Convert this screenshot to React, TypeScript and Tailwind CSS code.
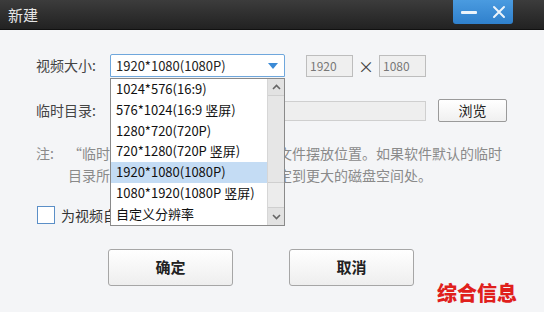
const options = [
  '1024*576(16:9)',
  '576*1024(16:9 竖屏)',
  '1280*720(720P)',
  '720*1280(720P 竖屏)',
  '1920*1080(1080P)',
  '1080*1920(1080P 竖屏)',
  '自定义分辨率',
]

export default function App() {
  const selected = '1920*1080(1080P)'
  return (
    <div className="relative w-[544px] h-[312px] overflow-hidden bg-[#f4f5f7] font-['Noto_Sans_CJK_SC',sans-serif] text-[14px] text-[#444]">
      {/* title bar */}
      <div className="h-[30px] flex items-start justify-between bg-gradient-to-b from-[#3c3c3c] to-[#222] border-b border-[#111]">
        <span className="pl-[8px] pt-[5px] text-[15px] leading-[20px] text-[#e6e6e6]">新建</span>
        <div className="mr-[31px] w-[60px] h-[24px] flex items-center justify-around rounded-b-[3px] bg-gradient-to-b from-[#4a9be0] to-[#2f80cc]">
          <span className="block w-[16px] h-[3px] bg-white/90 rounded-[1px]" />
          <svg width="14" height="14" viewBox="0 0 14 14">
            <path d="M2 2 L12 12 M12 2 L2 12" stroke="white" strokeWidth="2" strokeLinecap="round" opacity="0.9" />
          </svg>
        </div>
      </div>

      <div className="pt-[24px]">
        {/* row 1 */}
        <div className="flex items-center pl-[36px] h-[23px]">
          <span className="w-[74px]">视频大小:</span>
          <div className="w-[175px] h-[23px] flex items-center justify-between pl-[5px] pr-[6px] bg-white border border-[#6fa7dc] rounded-t-[2px] text-[13px] text-[#222]">
            <span>{selected}</span>
            <svg width="10" height="6" viewBox="0 0 10 6">
              <path d="M0 0 H10 L5 6 Z" fill="#3b8ad6" />
            </svg>
          </div>
          <div className="ml-[21px] w-[47px] h-[22px] flex items-center pl-[3px] bg-[#efefef] border border-[#bdbdbd] text-[12px] text-[#777]">1920</div>
          <span className="w-[26px] text-center text-[16px] text-[#444]">×</span>
          <div className="w-[47px] h-[22px] flex items-center pl-[3px] bg-[#efefef] border border-[#bdbdbd] text-[12px] text-[#777]">1080</div>
        </div>

        {/* row 2 */}
        <div className="flex items-center pl-[36px] mt-[22px] h-[23px]">
          <span className="w-[74px]">临时目录:</span>
          <div className="w-[316px] h-[20px] bg-[#eeeeee] border border-[#cfcfcf]" />
          <button className="ml-[12px] w-[69px] h-[23px] bg-gradient-to-b from-white to-[#f0f0f0] border border-[#9a9a9a] rounded-[2px] text-[14px] text-[#222]">浏览</button>
        </div>

        {/* note */}
        <div className="mt-[20px] pl-[36px] text-[14px] leading-[22px] text-[#8a8a8a]">
          <div className="flex">
            <span className="w-[32px]">注:</span>
            <span>“临时目录”是软件转换时的临时文件摆放位置。如果软件默认的临时</span>
          </div>
          <div className="pl-[32px]">目录所在磁盘空间不足，请将其指定到更大的磁盘空间处。</div>
        </div>

        {/* checkbox */}
        <div className="mt-[20px] pl-[37px] flex items-center h-[18px]">
          <span className="w-[18px] h-[18px] bg-white border border-[#5b8fc7]" />
          <span className="ml-[6px] text-[#333]">为视频自动添加水印</span>
        </div>

        {/* buttons */}
        <div className="mt-[25px] pl-[108px] flex gap-[56px]">
          <button className="w-[125px] h-[37px] bg-gradient-to-b from-white to-[#eeeeee] border border-[#a6a6a6] rounded-[3px] text-[15px] font-bold text-[#222]">确定</button>
          <button className="w-[125px] h-[37px] bg-gradient-to-b from-white to-[#eeeeee] border border-[#a6a6a6] rounded-[3px] text-[15px] font-bold text-[#222]">取消</button>
        </div>
      </div>

      {/* open dropdown list */}
      <div className="absolute left-[110px] top-[78px] w-[175px] h-[148px] flex bg-white border border-[#8a8a8a] text-[13px] text-[#111]">
        <ul className="flex-1 pt-[0px]">
          {options.map((o) => (
            <li
              key={o}
              className={`h-[20.8px] leading-[20.8px] pl-[5px] whitespace-nowrap ${o === selected ? 'bg-[#c4dcf4]' : ''}`}
            >
              {o}
            </li>
          ))}
        </ul>
        <div className="w-[17px] flex flex-col bg-[#ececec] border-l border-[#d6d6d6]">
          <div className="h-[17px] flex items-center justify-center bg-[#e2e2e2] border-b border-[#cfcfcf]">
            <svg width="9" height="6" viewBox="0 0 9 6">
              <path d="M1 5 L4.5 1.5 L8 5" stroke="#666" strokeWidth="1.6" fill="none" />
            </svg>
          </div>
          <div className="h-[87px] bg-[#e6e6e6] border-b border-[#cfcfcf]" />
          <div className="flex-1" />
          <div className="h-[18px] flex items-center justify-center bg-[#e2e2e2] border-t border-[#cfcfcf]">
            <svg width="9" height="6" viewBox="0 0 9 6">
              <path d="M1 1 L4.5 4.5 L8 1" stroke="#666" strokeWidth="1.6" fill="none" />
            </svg>
          </div>
        </div>
      </div>

      {/* watermark */}
      <span className="absolute left-[437px] top-[281px] text-[20px] leading-[24px] font-black text-[#e0201c] tracking-[0px]">综合信息</span>
    </div>
  )
}
